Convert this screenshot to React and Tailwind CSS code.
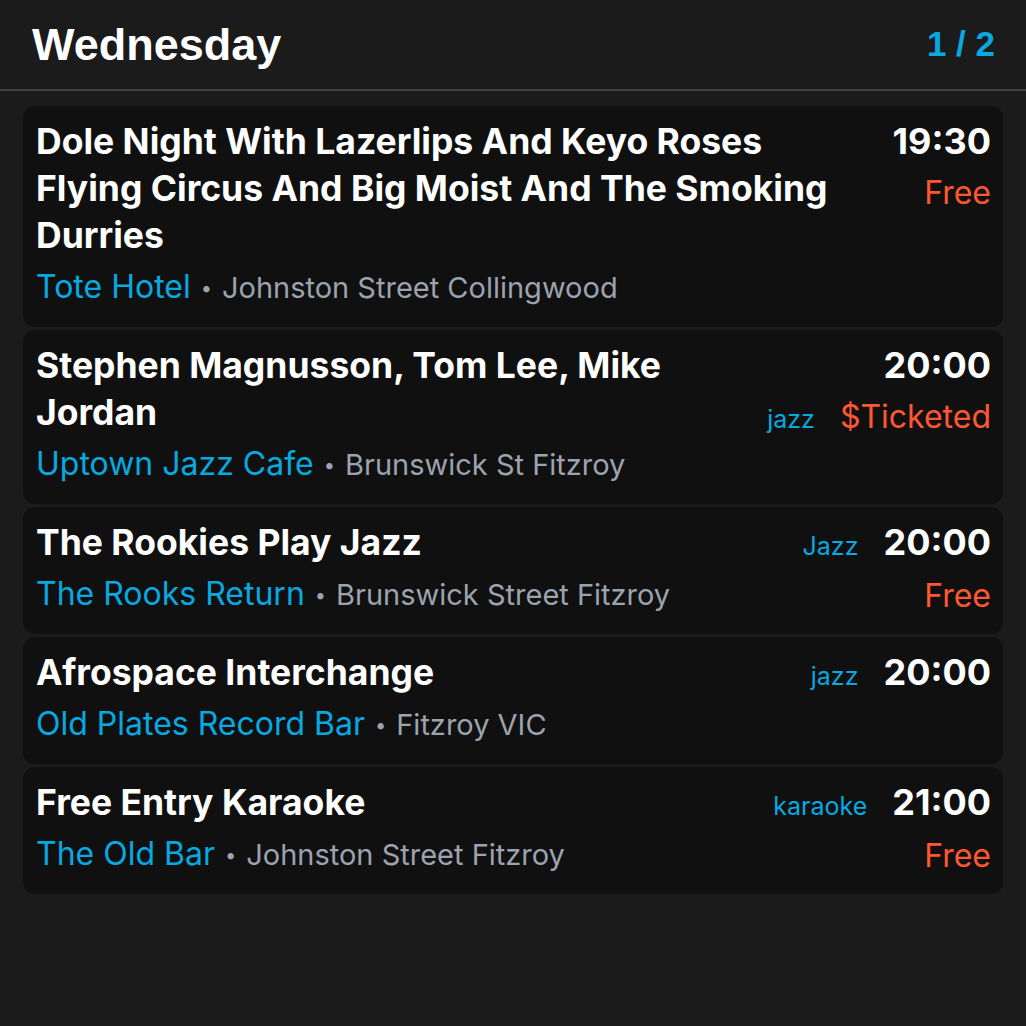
const events = [
  {
    title: 'Dole Night With Lazerlips And Keyo Roses Flying Circus And Big Moist And The Smoking Durries',
    venue: 'Tote Hotel',
    address: 'Johnston Street Collingwood',
    time: '19:30',
    price: 'Free',
  },
  {
    title: 'Stephen Magnusson, Tom Lee, Mike Jordan',
    venue: 'Uptown Jazz Cafe',
    address: 'Brunswick St Fitzroy',
    time: '20:00',
    price: '$Ticketed',
    tag: 'jazz',
    tagWithPrice: true,
  },
  {
    title: 'The Rookies Play Jazz',
    venue: 'The Rooks Return',
    address: 'Brunswick Street Fitzroy',
    time: '20:00',
    price: 'Free',
    tag: 'Jazz',
  },
  {
    title: 'Afrospace Interchange',
    venue: 'Old Plates Record Bar',
    address: 'Fitzroy VIC',
    time: '20:00',
    tag: 'jazz',
  },
  {
    title: 'Free Entry Karaoke',
    venue: 'The Old Bar',
    address: 'Johnston Street Fitzroy',
    time: '21:00',
    price: 'Free',
    tag: 'karaoke',
  },
]

function Tag({ children }) {
  return <span className="text-[25px] leading-[44px] text-[#07a9e0]">{children}</span>
}

function EventCard({ event }) {
  return (
    <div className="flex gap-12 rounded-xl bg-[#101010] pl-[13px] pr-[12px] pt-3 pb-[13px]">
      <div className="min-w-0 flex-1">
        <h2 className="text-[35.5px] font-bold leading-[47px] text-white">{event.title}</h2>
        <p className="mt-[6px] leading-[44px]">
          <span className="text-[32px] text-[#07a9e0]">{event.venue}</span>
          <span className="text-[29px] text-[#9ca3af]">
            <span className="mx-[10px] text-[20px] align-[3px]">•</span>
            {event.address}
          </span>
        </p>
      </div>
      <div className="flex shrink-0 flex-col items-end">
        <div className="flex items-baseline gap-[25px]">
          {event.tag && !event.tagWithPrice && <Tag>{event.tag}</Tag>}
          <span className="text-[36px] font-bold leading-[47px] text-white">{event.time}</span>
        </div>
        {event.price && (
          <div className="mt-[6px] flex items-baseline gap-[25px]">
            {event.tag && event.tagWithPrice && <Tag>{event.tag}</Tag>}
            <span className="text-[32px] leading-[44px] text-[#ff5733]">{event.price}</span>
          </div>
        )}
      </div>
    </div>
  )
}

export default function App() {
  return (
    <div className="min-h-[1026px] bg-[#1b1b1b] font-['Inter',sans-serif]">
      <header className="flex h-[91px] items-center justify-between border-b-2 border-[#3b4250] pl-8 pr-[31px]">
        <h1 className="font-['Liberation_Sans',Arial,sans-serif] text-[45px] font-bold text-white">Wednesday</h1>
        <span className="font-['Liberation_Sans',Arial,sans-serif] text-[35px] font-bold text-[#07a9e0]">1 / 2</span>
      </header>
      <div className="flex flex-col gap-[3px] px-[23px] pt-[15px]">
        {events.map((event) => (
          <EventCard key={event.title} event={event} />
        ))}
      </div>
    </div>
  )
}
